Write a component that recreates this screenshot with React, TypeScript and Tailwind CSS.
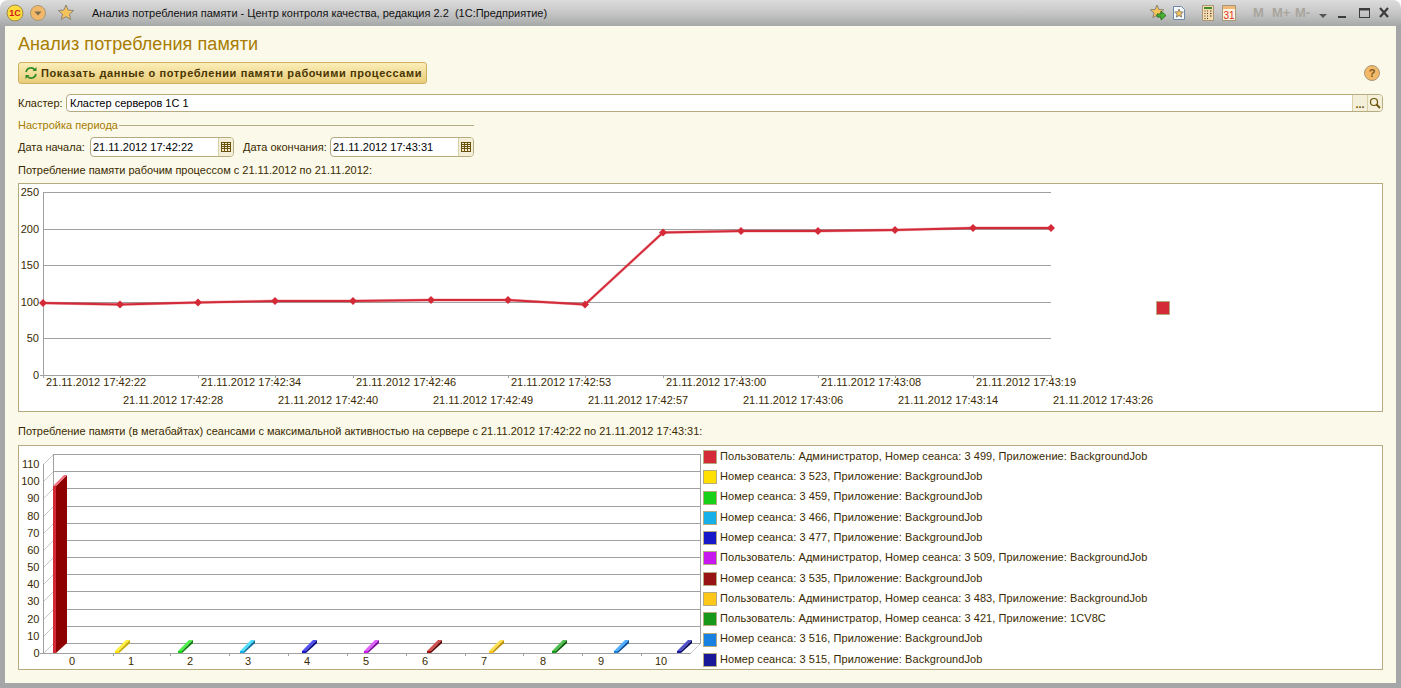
const LINE_POINTS = [
  [43, 303], [120, 304.5], [198, 302.5], [275, 301], [353, 301], [431, 300], [508, 300],
  [585, 304.5], [663, 232.5], [741, 231], [818, 231], [895, 230], [973, 228], [1051, 228],
];

const ROW_A = [
  [46, '21.11.2012 17:42:22'], [201, '21.11.2012 17:42:34'], [356, '21.11.2012 17:42:46'], [511, '21.11.2012 17:42:53'],
  [666, '21.11.2012 17:43:00'], [821, '21.11.2012 17:43:08'], [976, '21.11.2012 17:43:19'],
] as const;

const ROW_B = [
  [123, '21.11.2012 17:42:28'], [278, '21.11.2012 17:42:40'], [433, '21.11.2012 17:42:49'], [588, '21.11.2012 17:42:57'],
  [743, '21.11.2012 17:43:06'], [898, '21.11.2012 17:43:14'], [1053, '21.11.2012 17:43:26'],
] as const;

const LEGEND = [
  { color: 'bg-[#d42a38]', text: 'Пользователь: Администратор, Номер сеанса: 3 499, Приложение: BackgroundJob' },
  { color: 'bg-[#ffe000]', text: 'Номер сеанса: 3 523, Приложение: BackgroundJob' },
  { color: 'bg-[#18d018]', text: 'Номер сеанса: 3 459, Приложение: BackgroundJob' },
  { color: 'bg-[#18b0e8]', text: 'Номер сеанса: 3 466, Приложение: BackgroundJob' },
  { color: 'bg-[#1818c8]', text: 'Номер сеанса: 3 477, Приложение: BackgroundJob' },
  { color: 'bg-[#c818f0]', text: 'Пользователь: Администратор, Номер сеанса: 3 509, Приложение: BackgroundJob' },
  { color: 'bg-[#981414]', text: 'Номер сеанса: 3 535, Приложение: BackgroundJob' },
  { color: 'bg-[#ffc818]', text: 'Пользователь: Администратор, Номер сеанса: 3 483, Приложение: BackgroundJob' },
  { color: 'bg-[#189818]', text: 'Пользователь: Администратор, Номер сеанса: 3 421, Приложение: 1CV8C' },
  { color: 'bg-[#1880e0]', text: 'Номер сеанса: 3 516, Приложение: BackgroundJob' },
  { color: 'bg-[#181898]', text: 'Номер сеанса: 3 515, Приложение: BackgroundJob' },
];

const SMALL_BARS = [
  { x: 115, front: '#ffe000', top: '#fff040', side: '#c8a800' },
  { x: 178, front: '#18d018', top: '#50f050', side: '#0c800c' },
  { x: 240, front: '#18b0e8', top: '#50e0ff', side: '#0c70a0' },
  { x: 302, front: '#1818c8', top: '#5050f0', side: '#0c0c80' },
  { x: 364, front: '#c818f0', top: '#e060ff', side: '#800ca0' },
  { x: 427, front: '#981414', top: '#d05050', side: '#600808' },
  { x: 489, front: '#ffc818', top: '#ffe050', side: '#c09000' },
  { x: 552, front: '#189818', top: '#50c050', side: '#0c600c' },
  { x: 614, front: '#1880e0', top: '#50b0ff', side: '#0c50a0' },
  { x: 677, front: '#181898', top: '#5050c8', side: '#0c0c60' },
];

const GRID_Y = [454.5, 471.5, 488.5, 506.5, 523.5, 540.5, 557.5, 574.5, 591.5, 609.5, 626.5, 643.5];

function TableIcon() {
  return (
    <svg width="12" height="12" viewBox="0 0 12 12" fill="none" stroke="#6b5208">
      <rect x="1.5" y="1.5" width="9" height="9" />
      <path d="M1.5 3.5h9M1.5 5.5h9M1.5 7.5h9M4.5 1.5v9M7.5 1.5v9" />
    </svg>
  );
}

function DateField({ value }: { value: string }) {
  return (
    <div className="flex h-5 w-[144px] rounded-[4px] border border-[#b5aa80] bg-white">
      <span className="flex-1 pl-[2px] leading-[18px] text-[#000]">{value}</span>
      <span className="flex w-[15px] items-center justify-center rounded-r-[3px] border-l border-[#d8d0a8] bg-[#f3efd8]">
        <TableIcon />
      </span>
    </div>
  );
}

function Star({ x, y, r = 8 }: { x: number; y: number; r?: number }) {
  const pts = Array.from({ length: 10 }, (_, i) => {
    const a = -Math.PI / 2 + (i * Math.PI) / 5;
    const d = i % 2 ? r * 0.45 : r;
    return `${x + d * Math.cos(a)},${y + d * Math.sin(a)}`;
  }).join(' ');
  return <polygon points={pts} fill="#f6c25a" stroke="#8d8676" strokeWidth="1" />;
}

function Separator() {
  return <span className="mt-[2px] h-[20px] w-px self-start bg-[#9c9c9c]" />;
}

function TitleBar() {
  return (
    <div className="flex h-[26px] items-center rounded-t-[8px] bg-gradient-to-b from-[#dcdcdc] via-[#c6c6c6] to-[#a6a8a8] pr-[8px] pl-[6px] text-[11px] text-[#111]">
      <svg width="18" height="18" viewBox="0 0 18 18">
        <circle cx="9" cy="9" r="8" fill="#ffdc3c" stroke="#9a8a50" />
        <text x="9" y="12" textAnchor="middle" fontSize="9" fontWeight="700" fill="#d01818">1С</text>
      </svg>
      <svg width="18" height="18" viewBox="0 0 18 18" className="ml-[5px]">
        <circle cx="9" cy="9" r="7.5" fill="#f0b868" stroke="#a89878" />
        <path d="M5.5 7.5h7l-3.5 4z" fill="#7a6a50" />
      </svg>
      <span className="ml-[5px]"><Separator /></span>
      <svg width="20" height="20" viewBox="0 0 20 20" className="ml-[4px]">
        <Star x={10} y={10} r={8} />
      </svg>
      <span className="ml-[4px]"><Separator /></span>
      <span className="ml-[12px] font-['Liberation_Sans',sans-serif]">
        Анализ потребления памяти - Центр контроля качества, редакция 2.2&nbsp;&nbsp;(1С:Предприятие)
      </span>
      <div className="ml-auto flex items-center">
        <svg width="20" height="20" viewBox="0 0 20 20">
          <Star x={9} y={9} r={7} />
          <path d="M9 11h4V8l5 4.500-5 4.500v-3H9z" fill="#48b030" stroke="#226a18" strokeWidth="0.8" />
        </svg>
        <svg width="14" height="16" viewBox="0 0 14 16" className="ml-[4px]">
          <path d="M1.500 1.500h8l3 3v10h-11z" fill="#f4f8fc" stroke="#6d88a8" />
          <Star x={7} y={8.500} r={4.500} />
        </svg>
        <span className="ml-[8px]"><Separator /></span>
        <svg width="12" height="16" viewBox="0 0 12 16" className="ml-[8px]">
          <rect x="0.500" y="0.500" width="11" height="15" fill="#f6dcb0" stroke="#a89878" />
          <rect x="2" y="2" width="8" height="2" fill="#3c8a28" />
          <path d="M2.500 6h1M5 6h1M8 6h1.500M2.500 8.500h1M5 8.500h1M8 8.500h1.500M2.500 11h1M5 11h1M8 11h1.500M2.500 13.500h1M5 13.500h1" stroke="#4a3a20" />
        </svg>
        <svg width="14" height="16" viewBox="0 0 14 16" className="ml-[8px]">
          <rect x="0.500" y="0.500" width="13" height="15" fill="#fbf3e0" stroke="#a89878" />
          <rect x="1" y="1" width="12" height="3" fill="#f0b878" />
          <text x="7" y="14" textAnchor="middle" fontSize="10" fontWeight="400" fill="#e02c18">31</text>
        </svg>
        <span className="ml-[7px]"><Separator /></span>
        <span className="ml-[10px] w-[19px] text-[13px] font-bold text-[#a9a59c]">M</span>
        <span className="w-[23px] text-[13px] font-bold text-[#a9a59c]">M+</span>
        <span className="w-[23px] text-[13px] font-bold text-[#a9a59c]">M-</span>
        <svg width="8" height="8" viewBox="0 0 8 8" className="mt-[6px] ml-px">
          <path d="M0 2h8L4 6z" fill="#555" />
        </svg>
        <span className="ml-[4px]"><Separator /></span>
        <svg width="60" height="16" viewBox="0 0 60 16" className="ml-[2px]">
          <path d="M5 12h8" stroke="#3c3c3c" strokeWidth="2" />
          <rect x="26.500" y="3.500" width="10" height="9" fill="none" stroke="#3c3c3c" />
          <path d="M26.500 4.500h10" stroke="#3c3c3c" strokeWidth="2" />
          <path d="M47 3l8 9M55 3l-8 9" stroke="#3c3c3c" strokeWidth="2.200" />
        </svg>
      </div>
    </div>
  );
}

function LineChart() {
  const points = LINE_POINTS.map((p) => p.join(',')).join(' ');
  return (
    <svg width="1136" height="227" viewBox="19 184 1136 227" className="shrink-0" fontFamily="Liberation Sans, sans-serif" fontSize="11" fill="#3a2a00">
      {[192.5, 229.5, 265.5, 302.5, 338.5].map((y) => (
        <line key={y} x1="43" x2="1051" y1={y} y2={y} stroke="#a0a0a0" />
      ))}
      <path d="M43.500 192v186M40 375.500h1011" stroke="#a0a0a0" fill="none" />
      {LINE_POINTS.map(([x]) => (
        <line key={x} x1={x + 0.500} x2={x + 0.500} y1="375" y2="378" stroke="#a0a0a0" />
      ))}
      {[[192, '250'], [229, '200'], [265, '150'], [302, '100'], [338, '50'], [375, '0']].map(([y, t]) => (
        <text key={t} x="39" y={Number(y) + 4} textAnchor="end">{t}</text>
      ))}
      <polyline points={points} fill="none" stroke="#d42a38" strokeOpacity="0.35" strokeWidth="3" />
      <polyline points={points} fill="none" stroke="#d42a38" strokeWidth="1.800" />
      {LINE_POINTS.map(([x, y]) => (
        <polygon key={x} points={`${x - 4},${y} ${x},${y - 4} ${x + 4},${y} ${x},${y + 4}`} fill="#d42a38" />
      ))}
      {ROW_A.map(([x, t]) => (
        <text key={t} x={x} y="386">{t}</text>
      ))}
      {ROW_B.map(([x, t]) => (
        <text key={t} x={x} y="404">{t}</text>
      ))}
    </svg>
  );
}

function BarChart() {
  return (
    <svg width="684" height="223" viewBox="19 446 684 223" className="shrink-0" fontFamily="Liberation Sans, sans-serif" fontSize="11" fill="#3a2a00">
      {GRID_Y.map((y) => (
        <g key={y}>
          <line x1="53" x2="700" y1={y} y2={y} stroke="#a0a0a0" />
          <line x1="43.500" x2="53.500" y1={y + 10} y2={y} stroke="#c8c8c8" />
        </g>
      ))}
      <path d="M53.500 454v190M700.500 454v190" stroke="#a0a0a0" fill="none" />
      <path d="M43.500 464v190M40 653.500h651" stroke="#a0a0a0" fill="none" />
      <line x1="690.500" y1="653.500" x2="700.500" y2="643.500" stroke="#c8c8c8" />
      {[113, 170, 229, 288, 347, 406, 465, 523, 582, 641].map((x) => (
        <line key={x} x1={x + 0.500} x2={x + 0.500} y1="653" y2="656" stroke="#a0a0a0" />
      ))}
      {GRID_Y.map((y, i) => (
        <text key={y} x="39.500" y={y + 13} textAnchor="end">{(11 - i) * 10}</text>
      ))}
      {[72, 131, 190, 248, 307, 366, 425, 484, 543, 601, 661].map((x, i) => (
        <text key={x} x={x} y="665" textAnchor="middle">{i}</text>
      ))}
      <polygon points="53,486 56,486 56,653 53,653" fill="#d42a38" />
      <polygon points="56,486 67,475 67,643 56,653" fill="#8e0000" />
      <polygon points="53,486 56,486 67,475 64,475" fill="#f07080" />
      {SMALL_BARS.map((b) => (
        <g key={b.x}>
          <polygon points={`${b.x},651 ${b.x + 4},651 ${b.x + 15},640 ${b.x + 11},640`} fill={b.top} />
          <polygon points={`${b.x + 4},651 ${b.x + 4},653 ${b.x + 15},643 ${b.x + 15},640`} fill={b.side} />
          <rect x={b.x} y="651" width="4" height="2" fill={b.front} />
        </g>
      ))}
    </svg>
  );
}

export default function App() {
  return (
    <div className="flex h-[688px] w-[1401px] flex-col overflow-hidden bg-white font-['Liberation_Sans',sans-serif] text-[11px] text-[#3a2a00]">
      <TitleBar />
      <div className="flex flex-1 bg-[#a4a6a8] px-[5px] pb-[5px]">
        <main className="flex flex-1 flex-col bg-[#fbf9e9] px-[13px]">
          <h1 className="mt-[8px] h-[20px] text-[18px] leading-[20px] tracking-[0.08px] text-[#a87c00]">Анализ потребления памяти</h1>

          <div className="mt-[8px] flex items-center justify-between">
            <button className="flex h-[22px] w-[409px] items-center gap-[3px] rounded-[3px] border border-[#d0b060] bg-gradient-to-b from-[#fbeeb8] to-[#e8cc78] pl-[5px] text-[11px] font-bold tracking-[0.6px] text-[#4a3500]">
              <svg width="14" height="14" viewBox="0 0 14 14" fill="none" stroke="#2f8a2a" strokeWidth="1.600">
                <path d="M2 6a5 5 0 0 1 9-2" />
                <path d="M12 8a5 5 0 0 1-9 2" />
                <path d="M12.500 1v4h-4z" fill="#2f8a2a" stroke="none" />
                <path d="M1.500 13V9h4z" fill="#2f8a2a" stroke="none" />
              </svg>
              Показать данные о потреблении памяти рабочими процессами
            </button>
            <svg width="18" height="18" viewBox="0 0 18 18" className="mr-[2px]">
              <circle cx="9" cy="9" r="7.500" fill="#f3b868" stroke="#a89878" />
              <text x="9" y="13" textAnchor="middle" fontSize="11" fontWeight="700" fill="#7a5a20">?</text>
            </svg>
          </div>

          <div className="mt-[10px] flex h-[18px] items-center">
            <span className="w-[48px]">Кластер:</span>
            <div className="flex h-[18px] flex-1 rounded-[4px] border border-[#b5aa80] bg-white">
              <span className="flex-1 pl-[3px] leading-[16px] text-black">Кластер серверов 1С 1</span>
              <span className="flex w-[15px] items-end justify-center border-l border-[#d8d0a8] bg-[#f3efd8] pb-[1px] text-[11px] leading-[12px] font-bold text-[#6b5208]">...</span>
              <span className="flex w-[15px] items-center justify-center rounded-r-[3px] border-l border-[#d8d0a8] bg-[#f3efd8]">
                <svg width="12" height="12" viewBox="0 0 12 12" fill="none" stroke="#6b5208" strokeWidth="1.200">
                  <circle cx="5" cy="5" r="3.500" />
                  <path d="M7.500 7.500L11 11" strokeWidth="1.800" />
                </svg>
              </span>
            </div>
          </div>

          <div className="mt-[5px] flex h-[16px] w-[456px] items-center gap-[1px] text-[#a87c00]">
            <span>Настройка периода</span>
            <span className="h-px flex-1 bg-[#b5aa80]" />
          </div>

          <div className="mt-[4px] flex h-5 items-center">
            <span className="w-[72px]">Дата начала:</span>
            <DateField value="21.11.2012 17:42:22" />
            <span className="ml-[9px] w-[87px]">Дата окончания:</span>
            <DateField value="21.11.2012 17:43:31" />
          </div>

          <p className="mt-[5px] h-[16px] leading-[16px]">Потребление памяти рабочим процессом с 21.11.2012 по 21.11.2012:</p>

          <section className="mt-[5px] flex h-[229px] border border-[#b5aa80] bg-white">
            <LineChart />
            <span className="mt-[117px] ml-px h-[14px] w-[14px] border border-[#b5aa80] bg-[#d42a38]" />
          </section>

          <p className="mt-[11px] h-[16px] leading-[16px]">Потребление памяти (в мегабайтах) сеансами с максимальной активностью на сервере с 21.11.2012 17:42:22 по 21.11.2012 17:43:31:</p>

          <section className="mt-[6px] flex h-[225px] border border-[#b5aa80] bg-white">
            <BarChart />
            <ul className="mt-[4px] ml-0 flex h-[217px] flex-col justify-between">
              {LEGEND.map((item) => (
                <li key={item.text} className="flex h-[14px] items-center gap-[3px] tracking-[0.07px]">
                  <span className={`h-[14px] w-[14px] border border-[#b5aa80] ${item.color}`} />
                  <span className="-mt-[2px]">{item.text}</span>
                </li>
              ))}
            </ul>
          </section>
        </main>
      </div>
    </div>
  );
}
